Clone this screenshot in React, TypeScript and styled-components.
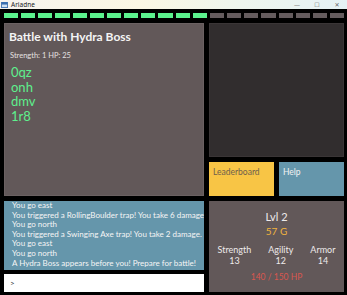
import { FC } from 'react';
import styled, { createGlobalStyle } from 'styled-components';

const GlobalStyle = createGlobalStyle`
  html, body {
    margin: 0;
    padding: 0;
    background: #000;
  }
  * {
    box-sizing: border-box;
  }
`;

const log = [
  'You go east',
  'You triggered a RollingBoulder trap! You take 6 damage.',
  'You go north',
  'You triggered a Swinging Axe trap! You take 2 damage.',
  'You go east',
  'You go north',
  'A Hydra Boss appears before you! Prepare for battle!',
];

const words = ['0qz', 'onh', 'dmv', '1r8'];

const stats = [
  { label: 'Strength', value: 13 },
  { label: 'Agility', value: 12 },
  { label: 'Armor', value: 14 },
];

const health = 12;
const segments = 20;

const App: FC = () => {
  return (
    <Window>
      <GlobalStyle />
      <TitleBar>
        <AppIcon viewBox="0 0 8 7">
          <rect x="0" y="0" width="8" height="7" fill="#3a6fb0" />
          <rect x="1" y="3" width="6" height="3" fill="#cfe0f2" />
        </AppIcon>
        <TitleText>Ariadne</TitleText>
        <Controls>
          <Control>—</Control>
          <Control>☐</Control>
          <Control>✕</Control>
        </Controls>
      </TitleBar>
      <Main>
        <HealthBar>
          {Array.from({ length: segments }).map((_, i) => (
            <Segment key={i} $on={i < health} />
          ))}
        </HealthBar>
        <Board>
          <Encounter>
            <Heading>Battle with Hydra Boss</Heading>
            <EnemyStats>Strength: 1 HP: 25</EnemyStats>
            <WordList>
              {words.map((w) => (
                <Word key={w}>{w}</Word>
              ))}
            </WordList>
          </Encounter>
          <Side>
            <MapView />
            <ButtonRow>
              <MenuButton $bg="#f8c545" $fg="#6e604d">
                Leaderboard
              </MenuButton>
              <MenuButton $bg="#6596ab" $fg="#f2f2f2">
                Help
              </MenuButton>
            </ButtonRow>
          </Side>
          <Console>
            <Log>
              {log.map((line, i) => (
                <LogLine key={i}>{line}</LogLine>
              ))}
            </Log>
            <Prompt>&gt;</Prompt>
          </Console>
          <Player>
            <Level>Lvl 2</Level>
            <Gold>57 G</Gold>
            <StatRow>
              {stats.map((s) => (
                <Stat key={s.label}>
                  <span>{s.label}</span>
                  <span>{s.value}</span>
                </Stat>
              ))}
            </StatRow>
            <Hp>140 / 150 HP</Hp>
          </Player>
        </Board>
      </Main>
    </Window>
  );
};

export default App;

const Window = styled.div`
  width: 347px;
  height: 295px;
  background: #000;
  font-family: Lato, 'Noto Sans', sans-serif;
  overflow: hidden;
`;

const TitleBar = styled.div`
  display: flex;
  align-items: center;
  height: 9px;
  padding-left: 1px;
  background: linear-gradient(90deg, #f6f3ee 0%, #fbf7e4 40%, #eef6ee 70%, #e6f1f5 100%);
  color: #222;
`;

const AppIcon = styled.svg`
  width: 7px;
  height: 6px;
`;

const TitleText = styled.span`
  margin-left: 3px;
  font-family: 'Noto Sans', sans-serif;
  font-size: 6.5px;
  line-height: 9px;
`;

const Controls = styled.div`
  display: flex;
  margin-left: auto;
  gap: 12px;
  padding-right: 6px;
`;

const Control = styled.span`
  width: 8px;
  font-family: 'DejaVu Sans', sans-serif;
  font-size: 6px;
  line-height: 9px;
  text-align: center;
  color: #666;
`;

const Main = styled.div`
  padding: 4px 3px 3px 4px;
`;

const HealthBar = styled.div`
  display: flex;
  gap: 3px;
  width: 340px;
  height: 5px;
`;

const Segment = styled.div<{ $on: boolean }>`
  flex: 1;
  background: ${({ $on }) => ($on ? '#5cf28e' : '#655c5e')};
`;

const Board = styled.div`
  display: grid;
  grid-template-columns: 200px 135px;
  grid-template-rows: 173px 91px;
  column-gap: 5px;
  row-gap: 5px;
  margin-top: 5px;
`;

const Encounter = styled.div`
  padding: 6px 4px;
  background: #625859;
  border: 1px solid #6b6162;
  color: #f4f4f4;
`;

const Heading = styled.h1`
  margin: 0;
  font-size: 12px;
  font-weight: 700;
  line-height: 14px;
`;

const EnemyStats = styled.p`
  margin: 7px 0 0 1px;
  font-size: 7.5px;
  line-height: 9px;
  color: #e4e0e0;
`;

const WordList = styled.div`
  display: flex;
  flex-direction: column;
  margin: 5px 0 0 2px;
`;

const Word = styled.span`
  font-size: 13px;
  line-height: 14.7px;
  color: #5ef08d;
`;

const Side = styled.div`
  display: flex;
  flex-direction: column;
  gap: 5px;
`;

const MapView = styled.div`
  flex: 1;
  background: #312d2e;
  border: 1px solid #3a3536;
`;

const ButtonRow = styled.div`
  display: flex;
  gap: 5px;
  height: 34px;
`;

const MenuButton = styled.div<{ $bg: string; $fg: string }>`
  flex: 1;
  padding: 4px 4px;
  background: ${({ $bg }) => $bg};
  color: ${({ $fg }) => $fg};
  font-size: 8.5px;
  line-height: 12px;
`;

const Console = styled.div`
  display: flex;
  flex-direction: column;
  gap: 4px;
`;

const Log = styled.div`
  flex: 1;
  padding: 0 0 0 8px;
  background: #6596ab;
  overflow: hidden;
`;

const LogLine = styled.div`
  font-size: 8px;
  line-height: 9.6px;
  white-space: nowrap;
  color: #f5f5f5;
`;

const Prompt = styled.div`
  height: 18px;
  padding-left: 6px;
  background: #fff;
  font-size: 8px;
  line-height: 18px;
  color: #333;
`;

const Player = styled.div`
  display: flex;
  flex-direction: column;
  align-items: center;
  padding-top: 9px;
  background: #625859;
  color: #eeeaea;
`;

const Level = styled.div`
  font-size: 11px;
  line-height: 13px;
`;

const Gold = styled.div`
  margin-top: 2px;
  font-size: 10px;
  line-height: 12px;
  color: #f1b53f;
`;

const StatRow = styled.div`
  display: flex;
  justify-content: center;
  gap: 17px;
  width: 100%;
  margin-top: 8px;
`;

const Stat = styled.div`
  display: flex;
  flex-direction: column;
  align-items: center;
  font-size: 9px;
  line-height: 10.5px;
`;

const Hp = styled.div`
  margin-top: 6px;
  font-size: 8.5px;
  line-height: 10px;
  color: #d9574f;
`;
